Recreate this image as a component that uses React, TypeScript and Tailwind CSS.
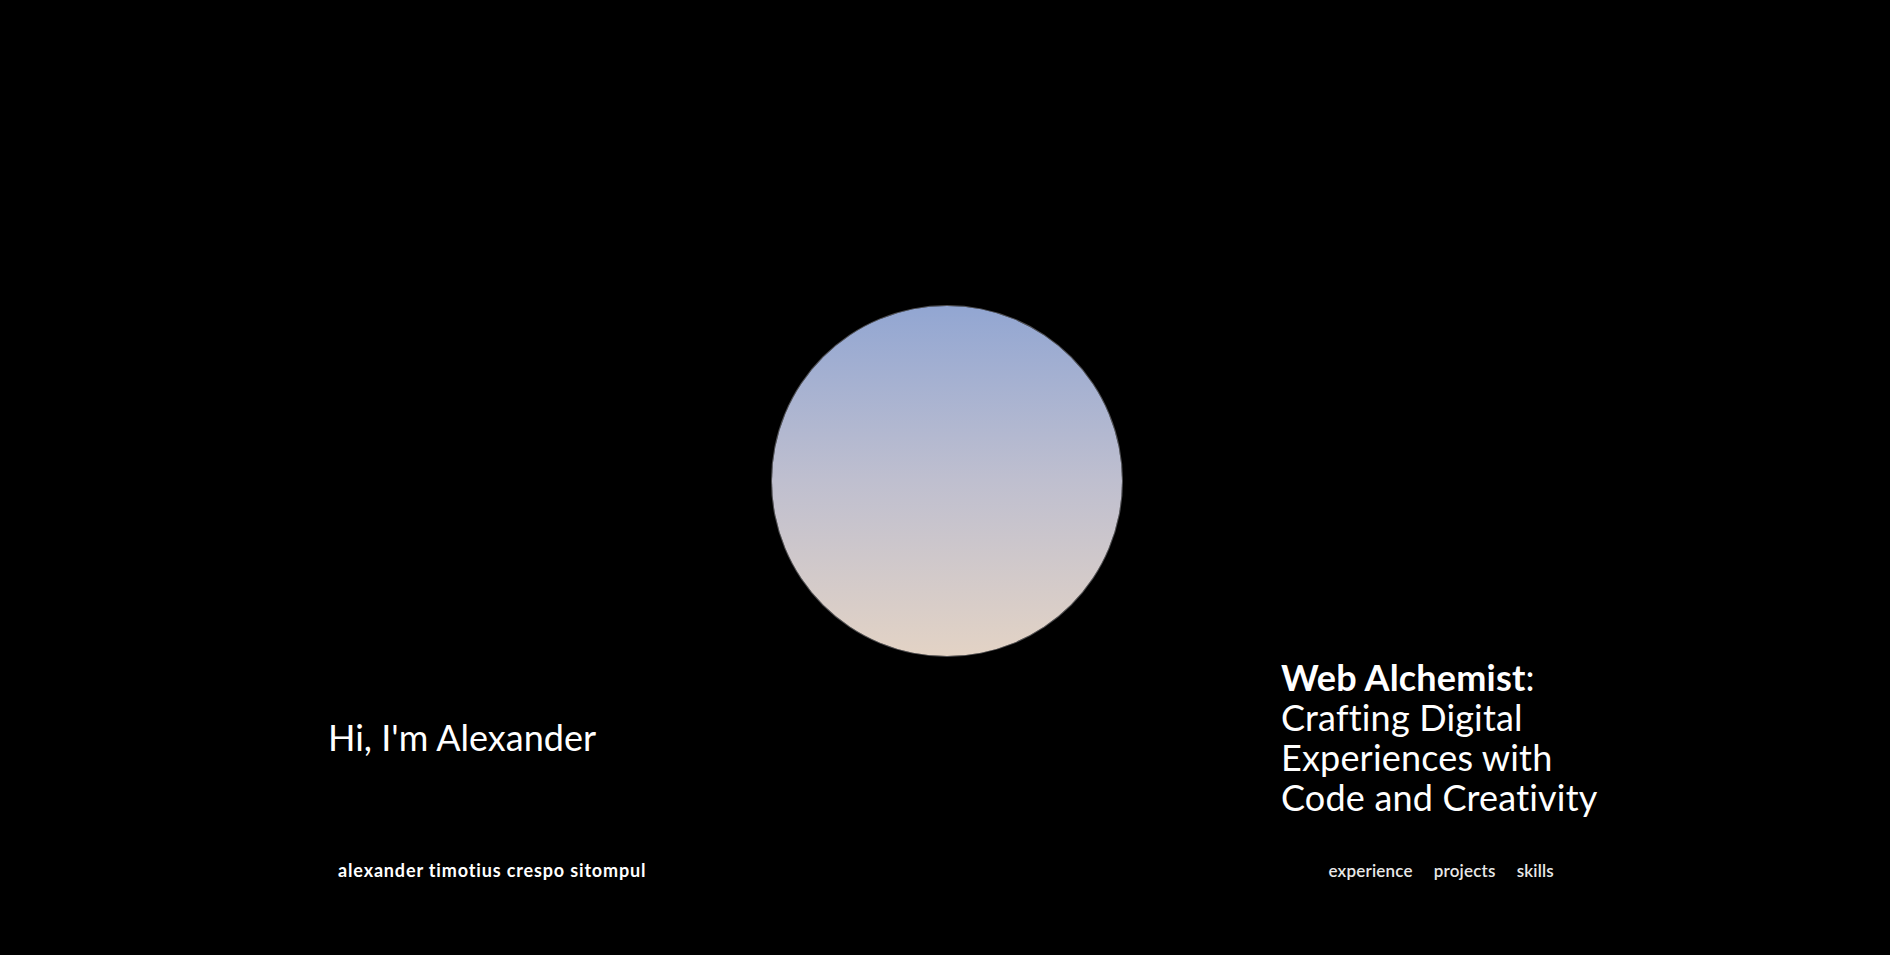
export default function App() {
  return (
    <main
      className="h-[955px] w-full bg-black text-white overflow-hidden flex flex-col"
      style={{ fontFamily: "Lato, 'Noto Sans', sans-serif" }}
    >
      <div className="pt-[306px] flex justify-center pl-[3px]">
        <div className="w-[350px] h-[350px] rounded-full bg-gradient-to-b from-[#92a6d2] via-[#bfbfcf] to-[#e3d3c5] ring-1 ring-[#cfcfd6]/40" />
      </div>

      <div className="flex items-center h-[170px] -mt-[4px]">
        <h2 className="pl-[328px] w-[1281px] text-[36px] leading-[40px] font-normal">
          Hi, I'm Alexander
        </h2>
        <h1 className="text-[36px] leading-[40px] font-normal tracking-[0.005em]">
          <span className="font-bold">Web Alchemist</span>:
          <br />
          Crafting Digital
          <br />
          Experiences with
          <br />
          Code and Creativity
        </h1>
      </div>

      <footer className="flex items-center justify-between pl-[338px] pr-[336px] pt-[35px]">
        <p className="text-[18px] font-bold tracking-[0.85px]">alexander timotius crespo sitompul</p>
        <nav className="flex gap-[21px] text-[17px] font-semibold tracking-[0.2px] text-[#e8e8e8]">
          <a>experience</a>
          <a>projects</a>
          <a>skills</a>
        </nav>
      </footer>
    </main>
  )
}
